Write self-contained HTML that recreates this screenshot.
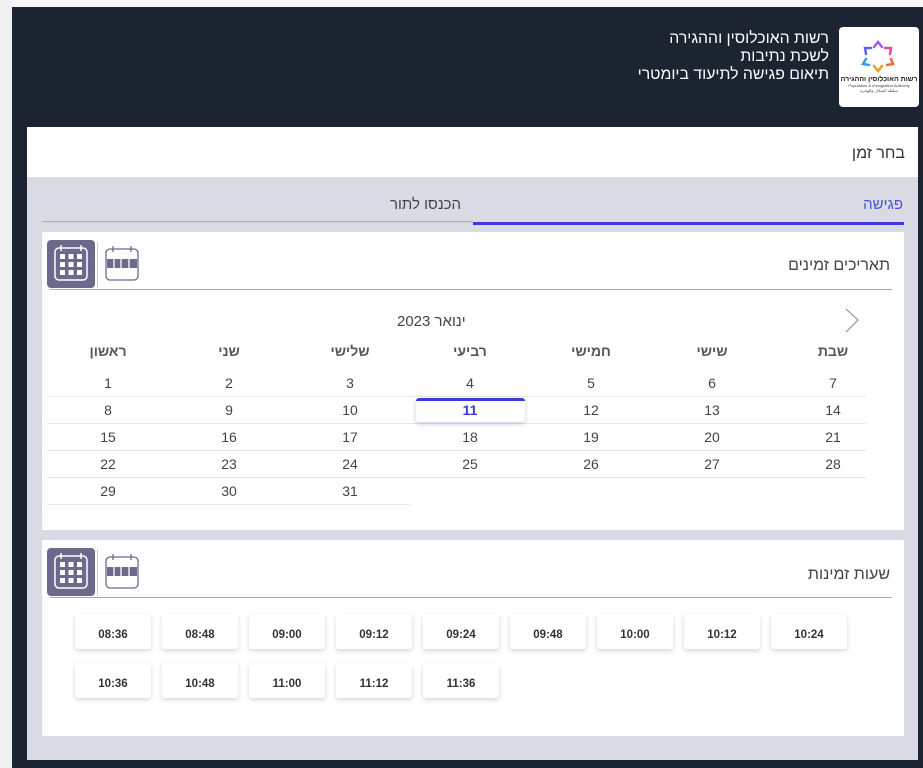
<!DOCTYPE html>
<html><head><meta charset="utf-8"><style>
*{margin:0;padding:0;box-sizing:border-box}
body{width:923px;height:768px;overflow:hidden;background:#1b2430;position:relative;font-family:"Liberation Sans","DejaVu Sans",sans-serif;color:#333}
.a{position:absolute}
.t{white-space:nowrap}
.hd{color:#fff;font-size:15.8px;direction:rtl;text-align:right;line-height:18px}
.day{position:absolute;width:60px;text-align:center;font-size:14px;color:#444}
.dh{position:absolute;width:80px;text-align:center;font-size:14px;font-weight:bold;color:#555}
.ln{position:absolute;height:1px;background:#e6e6e6}
.btn{position:absolute;width:76px;height:35px;background:#fff;border-radius:3px;box-shadow:0 2px 5px rgba(90,90,140,.25);font-size:11.5px;font-weight:bold;color:#333;text-align:center;line-height:42px}
</style></head><body>
<div class="a" style="left:0;top:0;width:923px;height:7px;background:#f8f8f8"></div>
<div class="a" style="left:0;top:0;width:12px;height:768px;background:#f0f0f0"></div>

<div class="a hd t" style="right:94px;top:30px">רשות האוכלוסין וההגירה<br>לשכת נתיבות<br>תיאום פגישה לתיעוד ביומטרי</div>
<div class="a" style="left:839px;top:27px;width:80px;height:80px;background:#fff;border-radius:4px">
<svg width="80" height="80" viewBox="0 0 80 80">
<g fill="none" stroke-width="2.5" stroke-linecap="round">
<path d="M35 20 L39 15 L43 20" stroke="#a05cf0"/>
<path d="M46 21 L52 21 L51 27" stroke="#e04aa0"/>
<path d="M52 32 L54 37 L48 38" stroke="#f06a40"/>
<path d="M35 39 L39 44 L43 39" stroke="#f0a020"/>
<path d="M30 38 L24 37 L27 32" stroke="#30a0f0"/>
<path d="M27 27 L26 21 L32 21" stroke="#6060f0"/>
</g>
<text x="40" y="54" font-size="7" font-weight="bold" text-anchor="middle" fill="#222" direction="rtl">רשות האוכלוסין וההגירה</text>
<text x="40" y="60" font-size="4" text-anchor="middle" fill="#444">Population &amp; Immigration Authority</text>
<text x="40" y="65" font-size="4" text-anchor="middle" fill="#444">سلطة السكان والهجرة</text>
</svg></div>

<div class="a" style="left:27px;top:127px;width:891px;height:50px;background:#fff"></div>
<div class="a t" style="right:18px;top:145px;font-size:16px;color:#333">בחר זמן</div>
<div class="a" style="left:27px;top:177px;width:891px;height:583px;background:#d8dbe3"></div>

<div class="a t" style="right:20px;top:196px;font-size:15px;color:#5050d0">פגישה</div>
<div class="a t" style="left:390px;top:196px;font-size:15px;color:#444">הכנסו לתור</div>
<div class="a" style="left:42px;top:221px;width:431px;height:1px;background:#aaa"></div>
<div class="a" style="left:473px;top:222px;width:431px;height:3px;background:#3a3ad8"></div>

<!-- card 1 -->
<div class="a" style="left:42px;top:232px;width:862px;height:298px;background:#fff"></div>
<div class="a t" style="right:33px;top:257px;font-size:16px;color:#444">תאריכים זמינים</div>
<div class="a" style="left:50px;top:289px;width:842px;height:1px;background:#aaa"></div>
<div class="a" style="left:47px;top:240px;width:48px;height:48px;background:#6b6a8c;border-radius:4px">
<svg width="48" height="48"><rect x="8" y="8" width="32" height="32" rx="4" fill="none" stroke="#fff" stroke-width="1.5"/><path d="M14 5v6M34 5v6" stroke="#fff" stroke-width="1.5"/><g fill="#fff"><rect x="13" y="14" width="5" height="5"/><rect x="21.5" y="14" width="5" height="5"/><rect x="30" y="14" width="5" height="5"/><rect x="13" y="22" width="5" height="5"/><rect x="21.5" y="22" width="5" height="5"/><rect x="30" y="22" width="5" height="5"/><rect x="13" y="30" width="5" height="5"/><rect x="21.5" y="30" width="5" height="5"/><rect x="30" y="30" width="5" height="5"/></g></svg></div>
<div class="a" style="left:97px;top:242px;width:1px;height:46px;background:#ccc"></div>
<div class="a" style="left:104px;top:244px"><svg width="36" height="38"><rect x="2" y="5" width="32" height="31" rx="4" fill="none" stroke="#6b6a8c" stroke-width="1.3"/><path d="M9 2v6M27 2v6" stroke="#6b6a8c" stroke-width="1.3"/><rect x="3" y="15" width="30" height="9" fill="#6b6a8c"/><path d="M10 15v9M17 15v9M25 15v9" stroke="#fff" stroke-width="1.3"/></svg></div>

<div class="a t" style="left:397px;top:313px;font-size:15px;color:#444">ינואר 2023</div>
<svg class="a" style="left:843px;top:307px" width="18" height="28"><path d="M3 2 L15 13 L3 25" fill="none" stroke="#888" stroke-width="1"/></svg>

<div class="dh" style="left:68px;top:343px">ראשון</div>
<div class="dh" style="left:189px;top:343px">שני</div>
<div class="dh" style="left:310px;top:343px">שלישי</div>
<div class="dh" style="left:430px;top:343px">רביעי</div>
<div class="dh" style="left:551px;top:343px">חמישי</div>
<div class="dh" style="left:672px;top:343px">שישי</div>
<div class="dh" style="left:793px;top:343px">שבת</div>

<div class="ln" style="left:47px;top:396px;width:819px"></div>
<div class="ln" style="left:47px;top:423px;width:819px"></div>
<div class="ln" style="left:47px;top:450px;width:819px"></div>
<div class="ln" style="left:47px;top:477px;width:819px"></div>
<div class="ln" style="left:47px;top:504px;width:363px"></div>

<div class="a" style="left:416px;top:398px;width:109px;height:24px;background:#fff;border-radius:3px;box-shadow:0 2px 5px rgba(90,90,150,.3);border-top:3px solid #3a3ad8"></div>

<div class="day" style="left:78px;top:375px">1</div><div class="day" style="left:199px;top:375px">2</div><div class="day" style="left:320px;top:375px">3</div><div class="day" style="left:440px;top:375px">4</div><div class="day" style="left:561px;top:375px">5</div><div class="day" style="left:682px;top:375px">6</div><div class="day" style="left:803px;top:375px">7</div>
<div class="day" style="left:78px;top:402px">8</div><div class="day" style="left:199px;top:402px">9</div><div class="day" style="left:320px;top:402px">10</div><div class="day" style="left:440px;top:402px;color:#3a3ad8;font-weight:bold">11</div><div class="day" style="left:561px;top:402px">12</div><div class="day" style="left:682px;top:402px">13</div><div class="day" style="left:803px;top:402px">14</div>
<div class="day" style="left:78px;top:429px">15</div><div class="day" style="left:199px;top:429px">16</div><div class="day" style="left:320px;top:429px">17</div><div class="day" style="left:440px;top:429px">18</div><div class="day" style="left:561px;top:429px">19</div><div class="day" style="left:682px;top:429px">20</div><div class="day" style="left:803px;top:429px">21</div>
<div class="day" style="left:78px;top:456px">22</div><div class="day" style="left:199px;top:456px">23</div><div class="day" style="left:320px;top:456px">24</div><div class="day" style="left:440px;top:456px">25</div><div class="day" style="left:561px;top:456px">26</div><div class="day" style="left:682px;top:456px">27</div><div class="day" style="left:803px;top:456px">28</div>
<div class="day" style="left:78px;top:483px">29</div><div class="day" style="left:199px;top:483px">30</div><div class="day" style="left:320px;top:483px">31</div>

<!-- card 2 -->
<div class="a" style="left:42px;top:540px;width:862px;height:196px;background:#fff"></div>
<div class="a t" style="right:33px;top:566px;font-size:16px;color:#444">שעות זמינות</div>
<div class="a" style="left:50px;top:597px;width:842px;height:1px;background:#aaa"></div>
<div class="a" style="left:47px;top:548px;width:48px;height:48px;background:#6b6a8c;border-radius:4px">
<svg width="48" height="48"><rect x="8" y="8" width="32" height="32" rx="4" fill="none" stroke="#fff" stroke-width="1.5"/><path d="M14 5v6M34 5v6" stroke="#fff" stroke-width="1.5"/><g fill="#fff"><rect x="13" y="14" width="5" height="5"/><rect x="21.5" y="14" width="5" height="5"/><rect x="30" y="14" width="5" height="5"/><rect x="13" y="22" width="5" height="5"/><rect x="21.5" y="22" width="5" height="5"/><rect x="30" y="22" width="5" height="5"/><rect x="13" y="30" width="5" height="5"/><rect x="21.5" y="30" width="5" height="5"/><rect x="30" y="30" width="5" height="5"/></g></svg></div>
<div class="a" style="left:97px;top:550px;width:1px;height:46px;background:#ccc"></div>
<div class="a" style="left:104px;top:552px"><svg width="36" height="38"><rect x="2" y="5" width="32" height="31" rx="4" fill="none" stroke="#6b6a8c" stroke-width="1.3"/><path d="M9 2v6M27 2v6" stroke="#6b6a8c" stroke-width="1.3"/><rect x="3" y="15" width="30" height="9" fill="#6b6a8c"/><path d="M10 15v9M17 15v9M25 15v9" stroke="#fff" stroke-width="1.3"/></svg></div>

<div class="btn" style="left:75px;top:614px">08:36</div><div class="btn" style="left:162px;top:614px">08:48</div><div class="btn" style="left:249px;top:614px">09:00</div><div class="btn" style="left:336px;top:614px">09:12</div><div class="btn" style="left:423px;top:614px">09:24</div><div class="btn" style="left:510px;top:614px">09:48</div><div class="btn" style="left:597px;top:614px">10:00</div><div class="btn" style="left:684px;top:614px">10:12</div><div class="btn" style="left:771px;top:614px">10:24</div>
<div class="btn" style="left:75px;top:663px">10:36</div><div class="btn" style="left:162px;top:663px">10:48</div><div class="btn" style="left:249px;top:663px">11:00</div><div class="btn" style="left:336px;top:663px">11:12</div><div class="btn" style="left:423px;top:663px">11:36</div>
</body></html>
